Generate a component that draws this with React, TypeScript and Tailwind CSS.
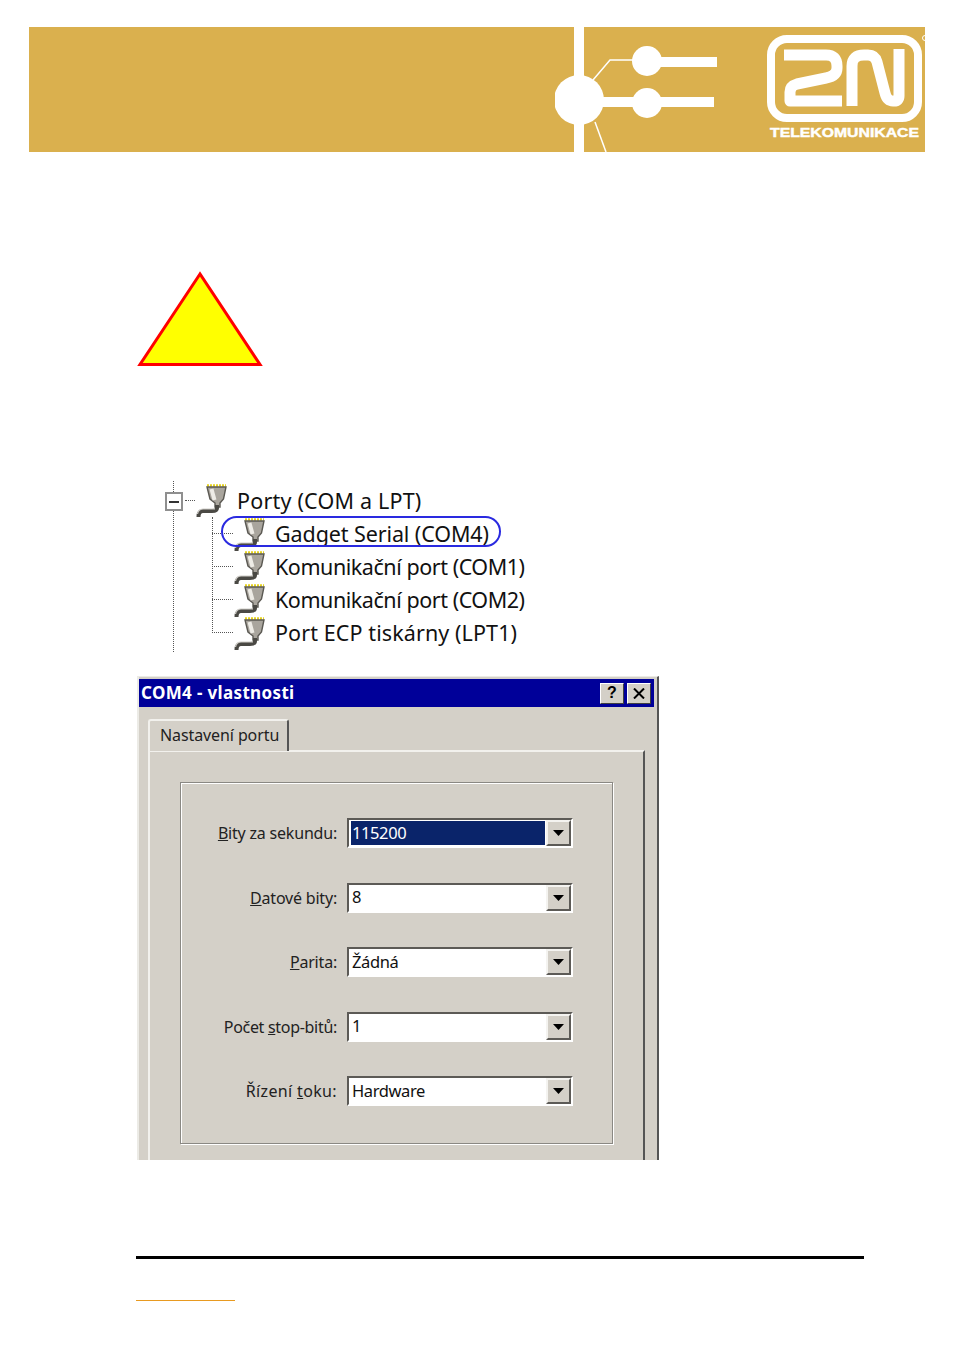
const FONT = "font-['Noto_Sans','DejaVu_Sans',sans-serif]";

const BannerArt = () => (
  <svg width="370" height="125" viewBox="555 27 370 125" className="block">
    <rect x="574" y="27" width="10" height="125" fill="#fff" />
    <circle cx="579" cy="100" r="25" fill="#fff" />
    <circle cx="647" cy="61" r="15" fill="#fff" />
    <circle cx="647" cy="103" r="15" fill="#fff" />
    <rect x="647" y="57" width="70" height="10" fill="#fff" />
    <rect x="600" y="97" width="114" height="10" fill="#fff" />
    <path d="M593 80L610 60H634" fill="none" stroke="#fff" strokeWidth="1.5" />
    <path d="M595 122L606 152" fill="none" stroke="#fff" strokeWidth="1.5" />
    <rect x="771" y="39" width="147" height="79" rx="16" fill="none" stroke="#fff" strokeWidth="8" />
    <path
      d="M784 55H826Q837 55 837 66V68Q837 76 826 78L797 84Q790 86 790 92V101H842"
      fill="none"
      stroke="#fff"
      strokeWidth="11"
      strokeLinejoin="round"
    />
    <path
      d="M852 106V66Q852 55 864 55H868Q875 55 877 62L885 93Q887 101 893 101H894Q899 101 899 96V49"
      fill="none"
      stroke="#fff"
      strokeWidth="11"
      strokeLinejoin="round"
    />
    <circle cx="925" cy="38" r="2.5" fill="none" stroke="#fff" />
    <text
      x="770"
      y="137"
      fill="#fff"
      stroke="#fff"
      strokeWidth="0.4"
      fontSize="12"
      fontWeight="700"
      fontFamily="Liberation Sans"
      textLength="149"
      lengthAdjust="spacingAndGlyphs"
    >
      TELEKOMUNIKACE
    </text>
  </svg>
);

const PortIcon = () => (
  <svg width="34" height="38" viewBox="0 0 34 38" className="shrink-0 block">
    <path d="M12 4.500H31" stroke="#e6d21e" strokeWidth="2.500" strokeDasharray="2 1" />
    <path d="M12 6H31L28.500 18L25 22V26H20V22L15 18Z" fill="#a9a59d" stroke="#5a5852" strokeWidth="1.400" />
    <path d="M16.500 8L19.500 19" stroke="#eeece6" strokeWidth="4" />
    <path d="M22 24V27Q22 30 17 30H8Q3.500 30 3.500 36" fill="none" stroke="#4a4944" strokeWidth="4" />
    <path d="M20 28H8Q3.500 28 2.500 33" fill="none" stroke="#d0cec8" strokeWidth="1.200" />
  </svg>
);

const TreeRow = ({ label, tracking }: { label: string; tracking: string }) => (
  <div className="flex items-center h-[33px]">
    <div className="w-[21px] border-t border-dotted border-[#555]"></div>
    <PortIcon />
    <span className={`ml-[8px] text-[21.5px] leading-none text-[#111] whitespace-nowrap ${tracking} ${FONT}`}>
      {label}
    </span>
  </div>
);

const ComboRow = ({
  pre,
  mark,
  post,
  value,
  selected,
  labelTracking = "tracking-[-0.2px]",
}: {
  pre: string;
  mark: string;
  post: string;
  value: string;
  selected?: boolean;
  labelTracking?: string;
}) => (
  <div className="flex items-center h-[30px]">
    <label className={`w-[156px] text-right text-[16px] text-[#222] whitespace-nowrap ${labelTracking} ${FONT}`}>
      {pre}
      <span className="underline">{mark}</span>
      {post}
    </label>
    <div className="ml-[10px] w-[226px] h-[30px] flex border-2 border-t-[#5c5a56] border-l-[#5c5a56] border-r-white border-b-white">
      <div className="flex-1 flex items-center pl-[1px] pr-px bg-white border border-r-0 border-white">
        <div
          className={`w-full h-full flex items-center pl-px text-[16.5px] tracking-[-0.4px] ${FONT} ${
            selected ? "bg-[#0a246a] text-white" : "text-[#111]"
          }`}
        >
          {value}
        </div>
      </div>
      <div className="w-[25px] flex items-center justify-center bg-[#d4d0c8] border-2 border-t-[#f4f3f0] border-l-[#f4f3f0] border-r-[#5c5a56] border-b-[#5c5a56]">
        <svg width="11" height="6" viewBox="0 0 11 6">
          <path d="M0 0H11L5.500 6Z" fill="#000" />
        </svg>
      </div>
    </div>
  </div>
);

const CaptionButton = ({ children }: { children: React.ReactNode }) => (
  <div className="w-[24px] h-[21px] flex items-center justify-center bg-[#d4d0c8] border border-t-white border-l-white border-r-[#404040] border-b-[#404040] text-black">
    {children}
  </div>
);

const App = () => {
  return (
    <div className="w-[954px] h-[1348px] bg-white overflow-hidden pt-[27px]">
      {/* Header banner */}
      <div className="mx-[29px] h-[125px] bg-[#dab04e] flex justify-end">
        <BannerArt />
      </div>

      {/* Warning triangle */}
      <svg width="126" height="97" viewBox="0 0 126 97" className="block ml-[137px] mt-[118px]">
        <path d="M63 4L3 94.500H123Z" fill="#ffff00" stroke="#ff0000" strokeWidth="3" />
      </svg>

      {/* Device tree */}
      <div className="relative ml-[173px] mt-[114px] h-[171px] w-[400px] border-l border-dotted border-[#555]">
        <div className="absolute left-[-9px] top-[11px] w-[18px] h-[19px] bg-white border-2 border-[#8f8f8f] flex items-center justify-center">
          <div className="w-[10px] h-[2px] bg-[#333]"></div>
        </div>
        <div className="flex items-center h-[38px] pl-[11px]">
          <div className="w-[10px] border-t border-dotted border-[#555]"></div>
          <PortIcon />
          <span className={`ml-[8px] mt-[2px] text-[21.5px] leading-none tracking-[0.2px] text-[#111] whitespace-nowrap ${FONT}`}>
            Porty (COM a LPT)
          </span>
        </div>
        <div className="relative ml-[38px] mt-[-2px]">
          <div className="absolute left-0 top-0 bottom-[16px] border-l border-dotted border-[#555]"></div>
          <TreeRow label="Gadget Serial (COM4)" tracking="tracking-[-0.1px]" />
          <TreeRow label="Komunikační port (COM1)" tracking="tracking-[-0.45px]" />
          <TreeRow label="Komunikační port (COM2)" tracking="tracking-[-0.45px]" />
          <TreeRow label="Port ECP tiskárny (LPT1)" tracking="tracking-[0.1px]" />
          <div className="absolute left-[9px] top-[-1px] w-[280px] h-[31px] rounded-full border-2 border-[#2a2ae0]"></div>
        </div>
      </div>

      {/* Properties dialog */}
      <div className="ml-[137px] mt-[24px] w-[522px] h-[484px] overflow-hidden bg-[#d4d0c8] border-t border-t-[#ecebe6] border-l-2 border-l-[#ecebe6] border-r-2 border-r-[#555] pt-[2px] pr-[3px]">
        <div className="h-[28px] bg-[#000099] flex items-center justify-between pl-[2px] pr-[3px]">
          <span className={`text-[17px] tracking-[0.35px] font-bold text-white ${FONT}`}>COM4 - vlastnosti</span>
          <div className="flex gap-[3px]">
            <CaptionButton>
              <span className="text-[16px] font-bold leading-none font-['Liberation_Sans']">?</span>
            </CaptionButton>
            <CaptionButton>
              <svg width="12" height="11" viewBox="0 0 12 11">
                <path d="M1 0.500L11 10.500M11 0.500L1 10.500" stroke="#000" strokeWidth="2" />
              </svg>
            </CaptionButton>
          </div>
        </div>

        <div className="pl-[9px] pr-[9px] pt-[12px]">
          <div className="relative z-10 w-[141px] h-[32px] pl-[10px] pt-[2px] mb-[-1px] bg-[#d4d0c8] rounded-t-[3px] border-t-2 border-t-[#f2f1ed] border-l-2 border-l-[#f2f1ed] border-r-2 border-r-[#555]">
            <span className={`text-[16px] tracking-[-0.1px] text-[#222] whitespace-nowrap ${FONT}`}>Nastavení portu</span>
          </div>
          <div className="h-[420px] border-t-2 border-t-[#f2f1ed] border-l-2 border-l-[#f2f1ed] border-r-2 border-r-[#555] pt-[30px] pl-[30px] pr-[30px]">
            <div className="w-[433px] h-[362px] border border-[#8a8883] shadow-[inset_1px_1px_0_#fff,1px_1px_0_#fff] pt-[35px] flex flex-col gap-[34.5px]">
              <ComboRow pre="" mark="B" post="ity za sekundu:" value="115200" selected />
              <ComboRow pre="" mark="D" post="atové bity:" value="8" />
              <ComboRow pre="" mark="P" post="arita:" value="Žádná" />
              <ComboRow pre="Počet " mark="s" post="top-bitů:" value="1" labelTracking="tracking-[-0.3px]" />
              <ComboRow pre="Řízení " mark="t" post="oku:" value="Hardware" labelTracking="tracking-[0.35px]" />
            </div>
          </div>
        </div>
      </div>

      {/* Footer rules */}
      <div className="ml-[136px] mt-[96px] w-[728px] h-[3px] bg-black"></div>
      <div className="ml-[136px] mt-[41px] w-[99px] h-px bg-[#e89a20]"></div>
    </div>
  );
};

export default App;
